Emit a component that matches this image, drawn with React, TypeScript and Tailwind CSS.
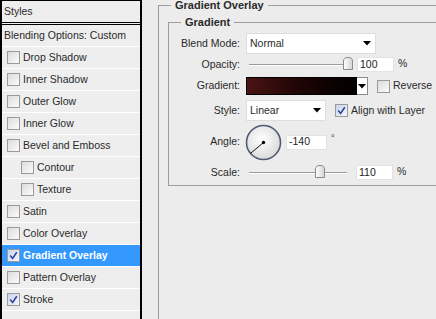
import React from 'react';

const font = { fontFamily: '"Liberation Sans", Arial, sans-serif' };

const Checkbox: React.FC<{ checked?: boolean }> = ({ checked }) => (
    <span
        className={`flex h-[13px] w-[13px] shrink-0 items-center justify-center border border-[#9a9a9a] ${
            checked ? 'bg-linear-to-br from-[#c9d4ec] to-[#f4f7fd]' : 'bg-linear-to-br from-[#dcdcdc] to-[#fbfbfb]'
        }`}
    >
        {checked && (
            <svg width="9" height="9" viewBox="0 0 9 9">
                <path d="M1.2 4.6 L3.6 7.4 L7.8 1.2" fill="none" stroke="#34449a" strokeWidth="1.6" />
            </svg>
        )}
    </span>
);

const Arrow: React.FC = () => (
    <svg width="8" height="5" viewBox="0 0 8 5" className="shrink-0">
        <path d="M0 0 H8 L4 4.5 Z" fill="#000" />
    </svg>
);

const Thumb: React.FC = () => (
    <svg width="10" height="13" viewBox="0 0 10 13">
        <defs>
            <linearGradient id="th" x1="0" y1="0" x2="1" y2="0">
                <stop offset="0" stopColor="#ffffff" />
                <stop offset="1" stopColor="#d4d4d4" />
            </linearGradient>
        </defs>
        <path d="M0.5 4 Q0.5 0.5 5 0.5 Q9.5 0.5 9.5 4 V12.5 H0.5 Z" fill="url(#th)" stroke="#8a8a8a" />
    </svg>
);

const Slider: React.FC<{ pos: number }> = ({ pos }) => (
    <div className="relative flex h-full w-[107px] items-center">
        <div className="ml-[3px] w-[98px] border-t border-b border-t-[#9c9c9c] border-b-white" />
        <div className="absolute top-[0px]" style={{ left: pos }}>
            <Thumb />
        </div>
    </div>
);

const Field: React.FC<{ value: string; w: string }> = ({ value, w }) => (
    <div className={`flex h-[15px] items-center border border-[#e2e2e2] bg-white pl-[2px] text-[#222] ${w}`}>
        {value}
    </div>
);

const styleRows = [
    { label: 'Drop Shadow' },
    { label: 'Inner Shadow' },
    { label: 'Outer Glow' },
    { label: 'Inner Glow' },
    { label: 'Bevel and Emboss' },
    { label: 'Contour', nested: true },
    { label: 'Texture', nested: true },
    { label: 'Satin' },
    { label: 'Color Overlay' },
    { label: 'Gradient Overlay', checked: true, selected: true },
    { label: 'Pattern Overlay' },
    { label: 'Stroke', checked: true },
];

const App: React.FC = () => {
    return (
        <div className="flex h-[319px] w-[436px] overflow-hidden bg-[#ececec] text-[10.5px] text-[#2a2a2a]" style={font}>
            {/* styles list */}
            <div className="flex h-full w-[142px] shrink-0 flex-col border-t border-l-2 border-r-2 border-black bg-[#eeeeee]">
                <div className="flex h-[22px] items-center border-b border-black px-[2px]">Styles</div>
                <div className="h-[2px] border-b border-black" />
                <div className="flex h-[22px] items-center border-b border-white px-[2px]">Blending Options: Custom</div>
                {styleRows.map((row) => (
                    <div
                        key={row.label}
                        className={`flex h-[22px] items-center border-b border-white ${row.nested ? 'pl-[19px]' : 'pl-[5px]'} ${
                            row.selected ? 'bg-[#3399ff] font-bold text-white' : ''
                        }`}
                    >
                        <Checkbox checked={row.checked} />
                        <span className="ml-[3px]">{row.label}</span>
                    </div>
                ))}
            </div>

            {/* settings */}
            <div className="min-w-0 flex-1 pl-[16px]">
                <fieldset className="h-[340px] w-[300px] border border-[#9d9d9d]">
                    <legend className="ml-[12px] px-[4px] text-[11px] leading-[10px] font-bold">Gradient Overlay</legend>
                    <fieldset className="mt-[7px] ml-[9px] w-[280px] border border-[#9d9d9d] pb-[5px]">
                        <legend className="ml-[12px] px-[4px] text-[11px] leading-[10px] font-bold">Gradient</legend>

                        <div className="mt-[6px] flex h-[21px] items-center">
                            <span className="w-[71px] text-right">Blend Mode:</span>
                            <div className="ml-[6px] flex h-[21px] w-[130px] items-center border border-[#dedede] bg-white pr-[4px] pl-[3px]">
                                <span>Normal</span>
                                <span className="ml-auto">
                                    <Arrow />
                                </span>
                            </div>
                        </div>

                        <div className="mt-[3px] flex h-[15px] items-center">
                            <span className="w-[71px] text-right">Opacity:</span>
                            <div className="ml-[6px] flex h-full items-center">
                                <Slider pos={97} />
                                <div className="ml-[4px]">
                                    <Field value="100" w="w-[37px]" />
                                </div>
                                <span className="ml-[4px] -mt-[2px]">%</span>
                            </div>
                        </div>

                        <div className="mt-[5px] flex h-[18px] items-center">
                            <span className="w-[71px] text-right">Gradient:</span>
                            <div className="ml-[6px] flex h-[18px] items-center">
                                <div className="h-[18px] w-[111px] border border-black bg-linear-to-r from-[#4a1414] via-[#1e0505] to-[#030000]" />
                                <div className="flex h-[18px] w-[11px] items-center justify-center border border-l-0 border-[#8a8a8a] bg-white">
                                    <Arrow />
                                </div>
                                <span className="ml-[9px]">
                                    <Checkbox />
                                </span>
                                <span className="ml-[3px]">Reverse</span>
                            </div>
                        </div>

                        <div className="mt-[5px] flex h-[21px] items-center">
                            <span className="w-[71px] text-right">Style:</span>
                            <div className="ml-[6px] flex h-[21px] w-[80px] items-center border border-[#dedede] bg-white pr-[4px] pl-[3px]">
                                <span>Linear</span>
                                <span className="ml-auto">
                                    <Arrow />
                                </span>
                            </div>
                            <span className="ml-[9px]">
                                <Checkbox checked />
                            </span>
                            <span className="ml-[3px]">Align with Layer</span>
                        </div>

                        <div className="mt-[3px] flex h-[36px] items-center">
                            <span className="w-[71px] text-right">Angle:</span>
                            <svg width="37" height="37" viewBox="0 0 37 37" className="ml-[5px]">
                                <defs>
                                    <radialGradient id="dial" cx="0.45" cy="0.4" r="0.6">
                                        <stop offset="0" stopColor="#ffffff" />
                                        <stop offset="1" stopColor="#dadada" />
                                    </radialGradient>
                                </defs>
                                <circle cx="18.5" cy="18.5" r="17" fill="url(#dial)" stroke="#4f5a76" strokeWidth="1.6" />
                                <line x1="18.5" y1="18.5" x2="5.5" y2="29.4" stroke="#111" strokeWidth="1" />
                                <circle cx="18.5" cy="18.5" r="1.7" fill="#000" />
                            </svg>
                            <div className="ml-[4px]">
                                <Field value="-140" w="w-[41px]" />
                            </div>
                            <span className="mb-[6px] ml-[4px] text-[9px]">°</span>
                        </div>

                        <div className="mt-[5px] flex h-[15px] items-center">
                            <span className="w-[71px] text-right">Scale:</span>
                            <div className="ml-[6px] flex h-full items-center">
                                <Slider pos={69} />
                                <div className="ml-[3px]">
                                    <Field value="110" w="w-[37px]" />
                                </div>
                                <span className="ml-[4px] -mt-[2px]">%</span>
                            </div>
                        </div>
                    </fieldset>
                </fieldset>
            </div>
        </div>
    );
};

export default App;
